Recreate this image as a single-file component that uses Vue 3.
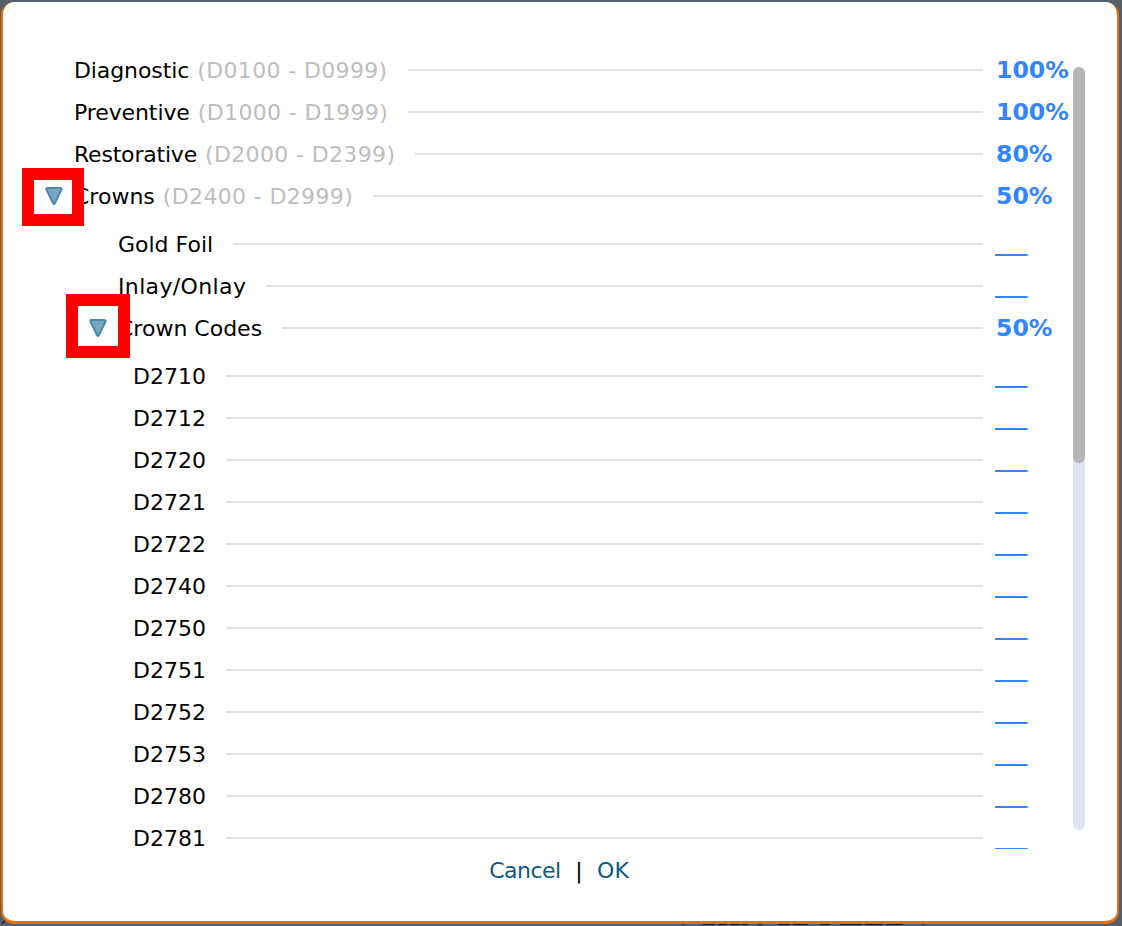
<script setup>
const groups = [
  { rows: [
    { label: 'Diagnostic', code: '(D0100 - D0999)', value: '100%', indent: 'top', track: -0.1 },
    { label: 'Preventive', code: '(D1000 - D1999)', value: '100%', indent: 'top', track: -0.1 },
    { label: 'Restorative', code: '(D2000 - D2399)', value: '80%', indent: 'top', track: -0.2 },
    { label: 'Crowns', code: '(D2400 - D2999)', value: '50%', indent: 'top', marker: 'first' },
  ] },
  { rows: [
    { label: 'Gold Foil', value: '___', indent: 'mid' },
    { label: 'Inlay/Onlay', value: '___', indent: 'mid', track: 0.36 },
    { label: 'Crown Codes', value: '50%', indent: 'mid', marker: 'second' },
  ] },
  { rows: ['D2710','D2712','D2720','D2721','D2722','D2740','D2750','D2751','D2752','D2753','D2780','D2781']
    .map((label) => ({ label, value: '___', indent: 'deep' })) },
]
const behind = [[682,2],[703,12],[718,9],[730,10],[742,6],[758,4],[778,12],[793,15],[820,10],[840,22],[865,18],[886,17],[922,2]]
</script>

<template>
  <div class="page">
    <div class="behind">
      <span v-for="b in behind" :key="b[0]" class="scrap" :style="{ left: b[0] + 'px', width: b[1] + 'px' }"></span>
    </div>
    <svg class="corner" width="8" height="8" viewBox="0 0 8 8">
      <path d="M6 1 C5.6 3.5 4.2 5 2 6.2" fill="none" stroke="#1c1c1c" stroke-width="1.4" />
    </svg>
    <div class="dialog">
      <div class="panel">
        <div class="list">
          <div v-for="(group, g) in groups" :key="g" class="group">
            <div v-for="row in group.rows" :key="row.label" class="row" :class="row.indent">
              <span class="label">
                <span :style="row.track ? { letterSpacing: row.track + 'px' } : null">{{ row.label }}</span>
                <span v-if="row.code" class="code">{{ row.code }}</span>
              </span>
              <span class="rule"></span>
              <span class="value" :class="{ dash: row.value === '___' }">{{ row.value }}</span>
              <span v-if="row.marker" class="marker" :class="row.marker">
                <svg width="22" height="22" viewBox="0 0 22 22">
                  <path d="M3.5 3.5 Q3 3 5 3 H17 Q19 3 18.5 4.5 L12 18 Q11 20 10 18 L3.5 4.5 Z" fill="#7ba6c0" stroke="#4588ad" stroke-width="2" stroke-linejoin="round" />
                </svg>
              </span>
            </div>
          </div>
        </div>
        <div class="scrollbar"><div class="thumb"></div></div>
      </div>
      <div class="footer">
        <a class="link cancel">Cancel</a>
        <span class="sep">|</span>
        <a class="link">OK</a>
      </div>
    </div>
  </div>
</template>

<style>
html, body { margin: 0; padding: 0; background: #55606b; }
</style>

<style scoped>
.page {
  position: relative;
  width: 1122px;
  height: 926px;
  box-sizing: border-box;
  padding: 2px 3px 2px 1px;
  background: #55606b;
  overflow: hidden;
  font-family: "DejaVu Sans", Verdana, sans-serif;
  font-size: 22px;
  color: #000;
}
.behind { position: absolute; left: 0; right: 0; top: 924px; height: 2px; }
.scrap { position: absolute; top: 0; height: 1px; background: #1c1c1c; }
.corner { position: absolute; left: 0; top: 917px; }
.dialog {
  position: relative;
  box-sizing: border-box;
  height: 100%;
  background: #fff;
  border: 3px solid #e96f0c;
  border-top: 0;
  border-left-width: 2px;
  border-right-width: 2px;
  border-radius: 13px;
  display: flex;
  flex-direction: column;
}
.panel {
  display: flex;
  height: 847px;
  flex: none;
  box-sizing: border-box;
  padding-top: 47px;
  overflow: hidden;
}
.list { width: 1070px; flex: none; }
.group + .group { margin-top: 6px; }
.row {
  position: relative;
  display: flex;
  align-items: center;
  height: 42px;
  white-space: nowrap;
}
.top { padding-left: 71px; }
.mid { padding-left: 115px; }
.deep { padding-left: 130px; }
.code { color: #bdbdbd; margin-left: 8px; letter-spacing: 0.36px; }
.rule {
  flex: 1;
  height: 2px;
  background: #e2e2e2;
  margin-left: 20px;
  margin-right: 12px;
}
.value {
  width: 77px;
  margin-left: 1px;
  flex: none;
  color: #3385ff;
  font-weight: 700;
  font-size: 23.6px;
}
.value.dash {
  width: 78px;
  margin-left: 0;
  font-size: 22px;
  letter-spacing: -0.3px;
  margin-top: -2px;
}
.marker {
  position: absolute;
  display: flex;
  align-items: center;
  justify-content: center;
  box-sizing: border-box;
  border: 12px solid #f00;
  background: #fff;
}
.marker.first { left: 19px; top: -7px; width: 62px; height: 58px; }
.marker.first svg { margin-top: -2px; margin-left: 2px; }
.marker.second { left: 63px; top: -13px; width: 64px; height: 64px; }
.marker.second svg { margin-top: 4px; }
.marker svg { filter: blur(0.5px); }
.scrollbar {
  width: 12px;
  flex: none;
  height: 763px;
  margin-top: 18px;
  border-radius: 6px;
  background: #dfe3ee;
}
.thumb {
  height: 396px;
  border-radius: 6px;
  background: #b5b5b5;
}
.footer {
  display: flex;
  justify-content: center;
  align-items: center;
  gap: 14.5px;
  height: 42px;
  padding-right: 2px;
}
.link { color: #0a5a85; }
.cancel { letter-spacing: -0.5px; }
</style>
